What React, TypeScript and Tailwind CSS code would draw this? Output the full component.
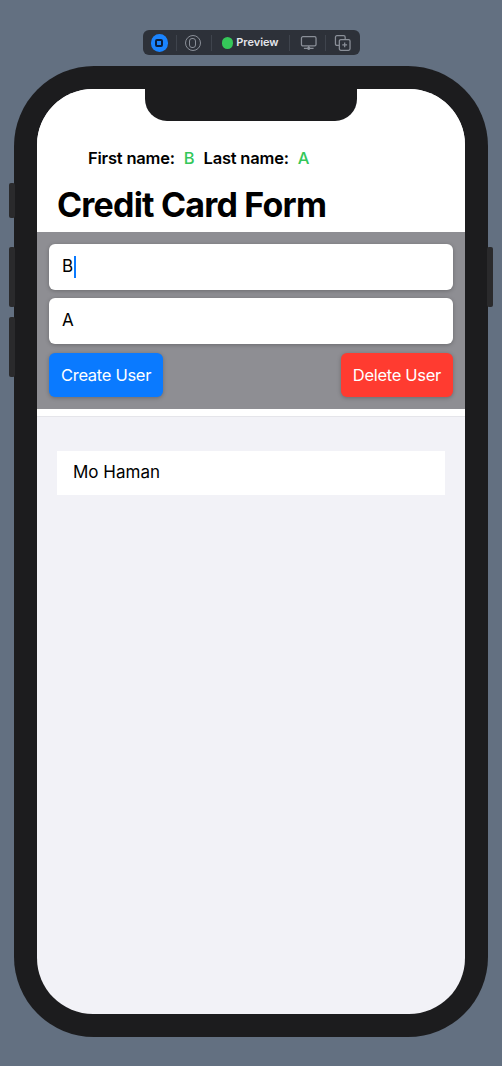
import { ReactNode } from "react";

const font = { fontFamily: "Inter, 'Noto Sans', sans-serif" };

const Toolbar = () => {
  return (
    <div className="mt-[30px] h-[25px] w-[217px] rounded-[6px] bg-[#2d3139] flex flex-row items-center px-[8px] text-[#b8bcc4]">
      <div className="w-[18px] h-[18px] rounded-full bg-[#1a84ff] flex items-center justify-center">
        <div className="w-[8px] h-[8px] rounded-[2px] border-[2px] border-[#0b1e3a]" />
      </div>
      <Sep />
      <div className="w-[16px] h-[16px] rounded-full border border-[#8a8f98] flex items-center justify-center">
        <div className="w-[7px] h-[10px] rounded-[3px] border border-[#8a8f98]" />
      </div>
      <Sep wide />
      <div className="w-[12px] h-[12px] rounded-full bg-[#35c759]" />
      <span className="ml-[3px] text-[11px] font-semibold text-[#e4e6ea]">Preview</span>
      <Sep wide />
      <svg width="18" height="16" viewBox="0 0 18 16" fill="none" stroke="#8a8f98" strokeWidth="1.3">
        <rect x="1.5" y="1.5" width="15" height="9.5" rx="1.5" />
        <path d="M9 11v2.5M4 13.5h10" />
        <circle cx="9" cy="13.5" r="1" fill="#8a8f98" />
      </svg>
      <Sep />
      <svg width="18" height="18" viewBox="0 0 18 18" fill="none" stroke="#8a8f98" strokeWidth="1.3">
        <rect x="1.5" y="1.5" width="10" height="10" rx="1.5" />
        <rect x="5.5" y="5.5" width="11" height="11" rx="1.5" fill="#2d3139" />
        <path d="M11 8.5v5M8.5 11h5" />
      </svg>
    </div>
  );
};

const Sep = ({ wide }: { wide?: boolean }) => {
  return <div className={wide ? "w-px h-[16px] bg-[#3f444d] mx-[10px]" : "w-px h-[16px] bg-[#3f444d] mx-[8px]"} />;
};

const Field = ({ children }: { children: ReactNode }) => {
  return (
    <div className="h-[46px] w-full rounded-[6px] bg-white flex items-center pl-[13px] text-[17px] text-black shadow-[0_1px_4px_rgba(0,0,0,0.25)]">
      {children}
    </div>
  );
};

const SideButton = ({ className }: { className: string }) => {
  return <div className={"absolute w-[6px] rounded-[2px] bg-[#2a2a2c] " + className} />;
};

const App = () => {
  return (
    <div className="w-[502px] h-[1066px] bg-[#637081] flex flex-col items-center" style={font}>
      <Toolbar />
      <div className="relative mt-[11px] w-[474px] h-[971px] rounded-[80px] bg-[#1c1c1e] p-[23px]">
        <SideButton className="left-[-5px] top-[117px] h-[35px]" />
        <SideButton className="left-[-5px] top-[181px] h-[60px]" />
        <SideButton className="left-[-5px] top-[251px] h-[60px]" />
        <SideButton className="right-[-5px] top-[181px] h-[60px]" />
        <div className="relative w-full h-full rounded-[56px] overflow-hidden bg-[#f2f2f7] flex flex-col">
          <div className="absolute top-0 left-[108px] w-[212px] h-[32px] bg-[#1c1c1e] rounded-b-[22px]" />
          <div className="bg-white pt-[58px] pb-[7px]">
            <div className="pl-[51px] flex flex-row items-center text-[16.5px] font-semibold leading-[22px] tracking-[-0.2px] text-black">
              <span>First name:</span>
              <span className="ml-[9px] font-medium text-[#34c759]">B</span>
              <span className="ml-[9px]">Last name:</span>
              <span className="ml-[9px] font-medium text-[#34c759]">A</span>
            </div>
            <div className="pl-[20px] mt-[15px] text-[34px] font-bold leading-[41px] tracking-[-0.8px] text-black">
              Credit Card Form
            </div>
          </div>
          <div className="bg-[#8e8e93] px-[12px] pt-[12px] pb-[12px] flex flex-col gap-[8px]">
            <Field>
              B<span className="ml-px w-[2px] h-[22px] bg-[#0a7aff]" />
            </Field>
            <Field>A</Field>
            <div className="flex flex-row justify-between mt-[1px]">
              <button className="h-[44px] px-[12px] rounded-[6px] bg-[#0a7aff] text-white text-[16.5px] tracking-[-0.3px] shadow-[0_1px_4px_rgba(0,0,0,0.25)]">
                Create User
              </button>
              <button className="h-[44px] px-[12px] rounded-[6px] bg-[#ff3b30] text-white text-[16.5px] tracking-[-0.3px] shadow-[0_1px_4px_rgba(0,0,0,0.25)]">
                Delete User
              </button>
            </div>
          </div>
          <div className="h-[8px] bg-white border-b border-[#e5e5ea]" />
          <div className="px-[20px] pt-[34px]">
            <div className="h-[44px] bg-white flex items-center pl-[16px] text-[17px] text-black">Mo Haman</div>
          </div>
        </div>
      </div>
    </div>
  );
};

export default App;
